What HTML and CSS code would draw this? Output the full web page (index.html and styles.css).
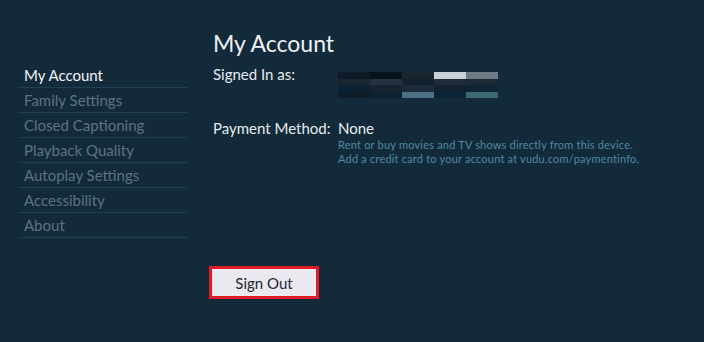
FILE: index.html
```html
<!DOCTYPE html>
<html lang="en">
<head>
  <meta charset="UTF-8">
  <title>My Account</title>
  <link rel="stylesheet" href="styles.css">
</head>
<body>
  <div class="screen">
    <nav class="menu">
      <div class="menu-item active">My Account</div>
      <div class="menu-item">Family Settings</div>
      <div class="menu-item">Closed Captioning</div>
      <div class="menu-item">Playback Quality</div>
      <div class="menu-item">Autoplay Settings</div>
      <div class="menu-item">Accessibility</div>
      <div class="menu-item">About</div>
    </nav>

    <main class="content">
      <h1>My Account</h1>

      <div class="row signed">
        <div class="label">Signed In as:</div>
        <div class="mosaic">
          <span style="background:#0e1a26"></span><span style="background:#06121d"></span><span style="background:#1a2530"></span><span style="background:#c8d0d8"></span><span style="background:#6e7a85"></span>
          <span style="background:#1a2632"></span><span style="background:#243240"></span><span style="background:#12202c"></span><span style="background:#1f2c38"></span><span style="background:#1c2834"></span>
          <span style="background:#0a2335"></span><span style="background:#16222e"></span><span style="background:#1a2a38"></span><span style="background:#13222f"></span><span style="background:#0e2634"></span>
          <span style="background:#101c28"></span><span style="background:#0c2230"></span><span style="background:#4a7085"></span><span style="background:#0d2436"></span><span style="background:#3c6a70"></span>
        </div>
      </div>

      <div class="row payment">
        <div class="label">Payment Method:</div>
        <div>
          <div class="value">None</div>
          <p class="hint">Rent or buy movies and TV shows directly from this device.<br>
          Add a credit card to your account at vudu.com/paymentinfo.</p>
        </div>
      </div>

      <div class="focus">
        <button class="btn">Sign Out</button>
      </div>
    </main>
  </div>
</body>
</html>
```

FILE: styles.css
```css
body {
  margin: 0;
  background-color: #132a3b;
  font-family: Lato, "Noto Sans", sans-serif;
  color: #e6eaee;
}

.screen {
  display: flex;
  height: 342px;
}

.menu {
  width: 170px;
  margin-left: 18px;
  padding-top: 63px;
}

.menu-item {
  height: 24px;
  line-height: 24px;
  padding-left: 6px;
  border-bottom: 1px solid #1f4053;
  font-size: 15px;
  color: #5d7384;
}

.menu-item.active {
  color: #f2f4f6;
}

.content {
  margin-left: 25px;
  flex: 1;
}

h1 {
  margin: 28px 0 0;
  font-size: 23px;
  font-weight: normal;
  line-height: 30px;
  color: #eef1f4;
}

.row {
  display: flex;
}

.label {
  width: 125px;
  font-size: 15px;
  line-height: 20px;
}

.mosaic {
  display: grid;
  grid-template-columns: repeat(5, 32px);
  grid-template-rows: repeat(4, 6.5px);
  margin-top: 8px;
}

.signed {
  margin-top: 6px;
}

.payment {
  margin-top: 20px;
}

.value {
  font-size: 15px;
  line-height: 20px;
}

.hint {
  margin: 0;
  font-size: 11px;
  line-height: 14px;
  letter-spacing: 0.2px;
  color: #4e8aa3;
}

.focus {
  display: inline-block;
  margin-top: 100px;
  margin-left: -4px;
  border: 3px solid #e01b24;
}

.btn {
  display: block;
  width: 104px;
  height: 27px;
  border: none;
  border-radius: 0;
  background-color: #e9e9ef;
  font-family: Lato, "Noto Sans", sans-serif;
  font-size: 15px;
  color: #1b2733;
}
```
